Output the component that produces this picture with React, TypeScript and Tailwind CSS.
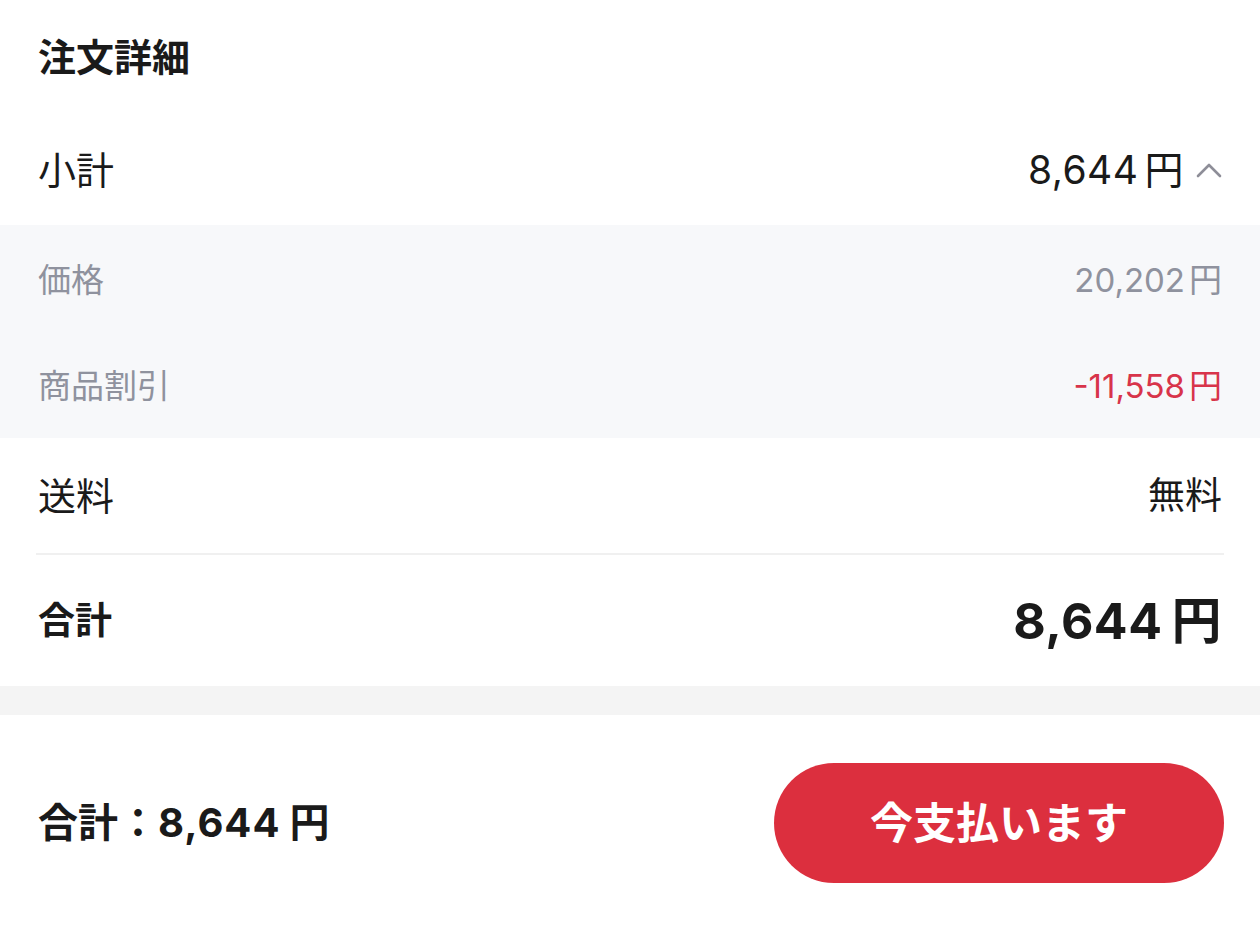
import React from "react";

const font = { fontFamily: 'Inter, "Noto Sans CJK JP", sans-serif' };

function Chevron() {
  return (
    <svg width="26" height="16" viewBox="0 0 26 16" className="ml-[12px]" fill="none">
      <path d="M2 14 L13 3 L24 14" stroke="#8e8e98" strokeWidth="2.6" strokeLinecap="round" strokeLinejoin="round" />
    </svg>
  );
}

export default function App() {
  return (
    <div className="w-[1260px] h-[950px] bg-white text-[#1a1a1a] overflow-hidden" style={font}>
      <div className="h-[114px] px-[38px] flex items-center">
        <h1 className="text-[38px] font-bold leading-none">注文詳細</h1>
      </div>
      <div className="h-[111px] px-[38px] flex items-center justify-between">
        <span className="text-[38px] leading-none">小計</span>
        <div className="flex items-center">
          <span className="text-[39px] leading-none tracking-[0.5px]">
            8,644<span className="ml-[6px]">円</span>
          </span>
          <Chevron />
        </div>
      </div>
      <div className="bg-[#f7f8fa] pt-[2px]">
        <div className="h-[107px] px-[38px] flex items-center justify-between text-[#8f929e]">
          <span className="text-[33px] leading-none">価格</span>
          <span className="text-[33px] leading-none">
            20,202<span className="ml-[4px]">円</span>
          </span>
        </div>
        <div className="h-[104px] px-[38px] flex items-center justify-between">
          <span className="text-[33px] leading-none text-[#8f929e]">商品割引</span>
          <span className="text-[33px] leading-none text-[#d8344a]">
            -11,558<span className="ml-[4px]">円</span>
          </span>
        </div>
      </div>
      <div className="px-[36px]">
        <div className="h-[115px] px-[2px] flex items-center justify-between">
          <span className="text-[38px] leading-none">送料</span>
          <span className="text-[37px] leading-none">無料</span>
        </div>
        <div className="h-[2px] bg-[#f0f0f0]" />
        <div className="h-[131px] px-[2px] flex items-center justify-between">
          <span className="text-[37px] font-bold leading-none">合計</span>
          <span className="text-[50px] font-bold leading-none tracking-[0.5px]">
            8,644<span className="ml-[9px]">円</span>
          </span>
        </div>
      </div>
      <div className="h-[29px] bg-[#f4f4f4]" />
      <div className="px-[36px] pt-[48px] flex items-center justify-between">
        <span className="pl-[2px] text-[40px] font-bold leading-none">
          合計：<span className="tracking-[1px]">8,644</span>
          <span className="ml-[9px]">円</span>
        </span>
        <button className="w-[450px] h-[120px] rounded-full bg-[#dc2f3e] text-white text-[43px] font-bold flex items-center justify-center">
          今支払います
        </button>
      </div>
    </div>
  );
}
